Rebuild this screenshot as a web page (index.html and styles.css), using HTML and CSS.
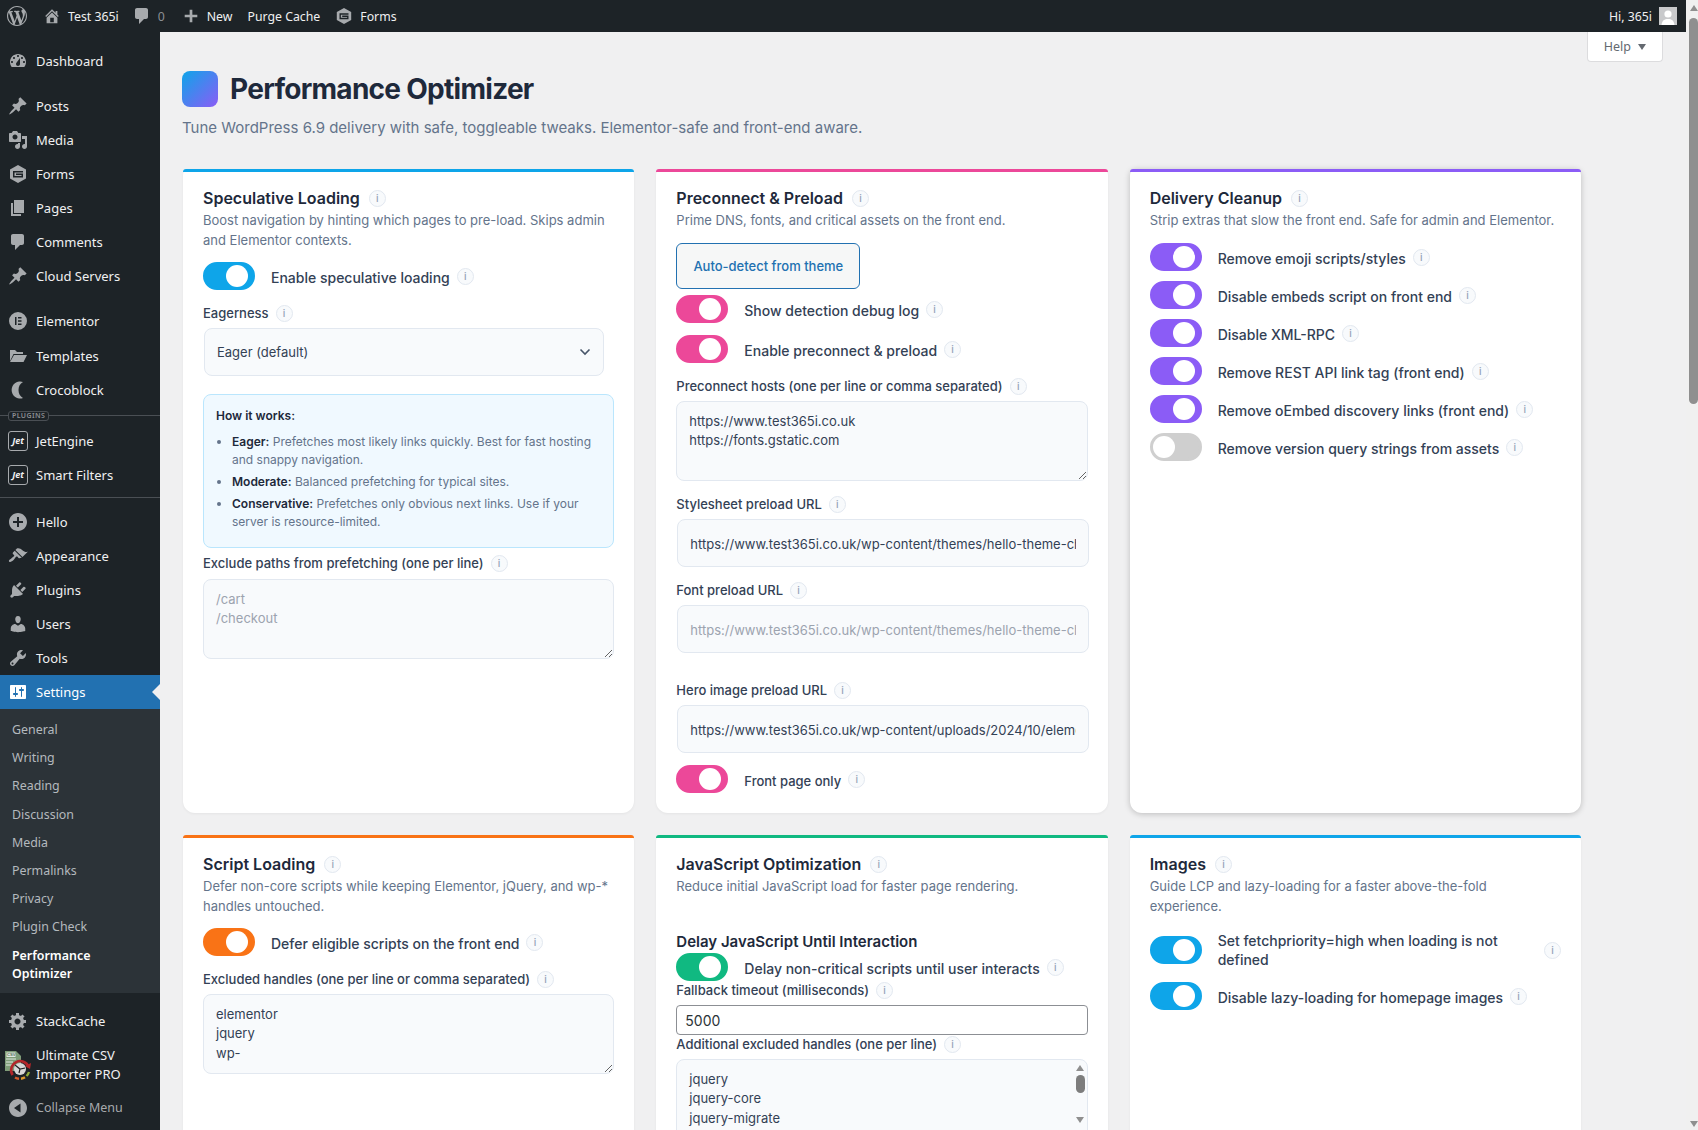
FILE: index.html
```html
<!DOCTYPE html>
<html lang="en">
<head>
    <meta charset="UTF-8">
    <title>Performance Optimizer</title>
    <link rel="stylesheet" href="styles.css">
</head>
<body>
<svg class="sprite" xmlns="http://www.w3.org/2000/svg">
    <symbol id="i-wp" viewBox="0 0 20 20"><path d="M20 10c0-5.510-4.490-10-10-10C4.480 0 0 4.490 0 10c0 5.520 4.480 10 10 10 5.510 0 10-4.480 10-10zM7.780 15.370L4.370 6.220c.55-.02 1.170-.08 1.170-.08.500-.06.440-1.130-.060-1.110 0 0-1.450.110-2.370.110-.18 0-.37 0-.58-.01C4.120 2.690 6.890 1.050 10 1.050c2.330 0 4.450.870 6.030 2.340-.680-.110-1.650.390-1.650 1.580 0 .740.45 1.360.9 2.100.35.610.55 1.360.55 2.460 0 1.490-1.400 5-1.400 5l-3.030-8.370c.54-.020.820-.17.820-.17.500-.05.440-1.250-.060-1.220 0 0-1.440.120-2.380.120-.87 0-2.330-.120-2.330-.120-.500-.030-.560 1.200-.060 1.220l.920.080 1.260 3.410zM17.410 10c.24-.640.740-1.870.430-4.250.7 1.290 1.050 2.710 1.050 4.250 0 3.290-1.730 6.240-4.480 7.830 1-2.670 2-5.220 3-7.830zM6.100 18.090C3.120 16.650 1.110 13.530 1.110 10c0-1.300.230-2.480.72-3.590C3.250 10.300 4.670 14.200 6.100 18.090zm4.030-6.630l2.580 6.980c-.860.290-1.760.450-2.710.450-.790 0-1.570-.110-2.290-.330.810-2.380 1.620-4.740 2.420-7.100z"/></symbol>
    <symbol id="i-home" viewBox="0 0 20 20"><path d="M16 8.500l1.530 1.530-1.060 1.060L10 4.620l-6.470 6.470-1.060-1.060L10 2.500l4 4v-2h2v4zm-6-2.460l6 5.990V18H4v-5.970zM12 17v-5H8v5h4z"/></symbol>
    <symbol id="i-comment" viewBox="0 0 20 20"><path d="M5 2h9c1.100 0 2 .9 2 2v7c0 1.100-.9 2-2 2h-2l-5 5v-5H5c-1.100 0-2-.9-2-2V4c0-1.100.9-2 2-2z"/></symbol>
    <symbol id="i-plus" viewBox="0 0 20 20"><path d="M17 8.500v3h-5.500V17h-3v-5.500H3v-3h5.500V3h3v5.500z"/></symbol>
    <symbol id="i-gf" viewBox="0 0 20 20"><path fill-rule="evenodd" d="M10 1l8 4.500v9L10 19l-8-4.500v-9zM5 7v6.500h10V9.500H8V11h5.500v1H6.500V8.500H15V7z"/></symbol>
    <symbol id="i-dashboard" viewBox="0 0 20 20"><path fill-rule="evenodd" d="M3.760 16h12.480c1.100-1.370 1.760-3.110 1.760-5 0-4.420-3.580-8-8-8s-8 3.580-8 8c0 1.890.66 3.630 1.760 5zM10 4c.55 0 1 .45 1 1s-.45 1-1 1-1-.45-1-1 .45-1 1-1zM6 6c.55 0 1 .45 1 1s-.45 1-1 1-1-.45-1-1 .45-1 1-1zm8 0c.55 0 1 .45 1 1s-.45 1-1 1-1-.45-1-1 .45-1 1-1zm-5.370 5.550L12 7v6c0 1.100-.9 2-2 2s-2-.9-2-2c0-.57.24-1.080.63-1.450zM4 10c.55 0 1 .45 1 1s-.45 1-1 1-1-.45-1-1 .45-1 1-1zm12 0c.55 0 1 .45 1 1s-.45 1-1 1-1-.45-1-1 .45-1 1-1z"/></symbol>
    <symbol id="i-pin" viewBox="0 0 20 20"><path d="M10.440 3.020l1.820-1.820 6.360 6.350-1.830 1.820c-1.050-.68-2.480-.57-3.410.36l-.75.75c-.92.93-1.040 2.350-.35 3.410l-1.830 1.820-2.410-2.410-2.800 2.790c-.42.42-3.380 2.710-3.800 2.290s1.860-3.390 2.280-3.810l2.790-2.790L4.100 9.360l1.830-1.820c1.050.69 2.480.57 3.410-.36l.75-.75c.93-.92 1.050-2.350.35-3.410z"/></symbol>
    <symbol id="i-media" viewBox="0 0 20 20"><path fill-rule="evenodd" d="M13 11V4c0-.55-.45-1-1-1h-1.670L9 1H5L3.670 3H2c-.55 0-1 .45-1 1v7c0 .55.45 1 1 1h10c.55 0 1-.45 1-1zM7 4.500c1.380 0 2.500 1.120 2.500 2.500S8.380 9.500 7 9.500 4.500 8.380 4.500 7 5.620 4.500 7 4.500zM14 6h5v10.500c0 1.380-1.120 2.500-2.500 2.500S14 17.880 14 16.500s1.120-2.500 2.500-2.500c.17 0 .34.020.5.050V9h-3V6zm-4 8.050V13h2v3.500c0 1.380-1.120 2.500-2.500 2.500S7 17.880 7 16.500 8.120 14 9.500 14c.17 0 .34.020.5.050z"/></symbol>
    <symbol id="i-page" viewBox="0 0 20 20"><path d="M6 15V2h10v13H6zm-1 1h8v2H3V5h2v11z"/></symbol>
    <symbol id="i-elementor" viewBox="0 0 20 20"><path fill-rule="evenodd" d="M10 1a9 9 0 1 0 0 18 9 9 0 0 0 0-18zM7 6h1.500v8H7zM10 6h3.500v1.500H10zM10 9.250h3.500v1.500H10zM10 12.500h3.500V14H10z"/></symbol>
    <symbol id="i-folder" viewBox="0 0 20 20"><path d="M2 4h5l2 2h6v2H5.500L2 15zM6 9h13l-3.500 7H2z"/></symbol>
    <symbol id="i-croco" viewBox="0 0 20 20"><path d="M15 2a8.500 8.500 0 1 0 0 16c-3-1.500-4.500-4.500-4.500-8S12 3.500 15 2z"/></symbol>
    <symbol id="i-plus-alt" viewBox="0 0 20 20"><path d="M10 1c-5 0-9 4-9 9s4 9 9 9 9-4 9-9-4-9-9-9zm5 10h-4v4H9v-4H5V9h4V5h2v4h4v2z"/></symbol>
    <symbol id="i-brush" viewBox="0 0 20 20"><path d="M14.480 11.060L7.410 3.990l1.500-1.500c.5-.56 2.300-.47 3.510.32 1.210.8 1.430 1.280 2.910 2.100 1.180.64 2.450 1.260 4.450.85zm-.71.71L6.700 4.700 4.930 6.470c-.39.39-.39 1.020 0 1.410l1.060 1.060c.39.39.39 1.030 0 1.420-.6.6-1.430 1.110-2.210 1.690-.35.26-.7.53-1.010.84C1.430 13.230.28 14.750 1.200 15.670c.98.98 2.990-.21 4.360-1.590.31-.31.58-.66.84-1.010.57-.78 1.080-1.610 1.690-2.210.39-.39 1.020-.39 1.410 0l1.060 1.060c.39.39 1.020.39 1.410 0z"/></symbol>
    <symbol id="i-plugin" viewBox="0 0 20 20"><path d="M13.110 4.360L9.870 7.600 8 5.730l3.240-3.240c.35-.34 1.050-.2 1.560.32.52.51.66 1.210.31 1.550zm-8 1.770l.91-1.120 9.010 9.010-1.190.84c-.71.71-2.630 1.160-3.820 1.160H6.140L4.900 17.260c-.59.59-1.540.59-2.120 0-.59-.58-.59-1.530 0-2.120l1.240-1.240v-3.880c0-1.130.4-3.190 1.090-3.890zm7.260 3.970l3.240-3.240c.34-.35 1.040-.21 1.550.31.52.51.66 1.210.31 1.550l-3.240 3.250z"/></symbol>
    <symbol id="i-user" viewBox="0 0 20 20"><path d="M10 9.250c-2.270 0-2.730-3.440-2.730-3.440C7 4.020 7.820 2 9.970 2c2.160 0 2.980 2.020 2.710 3.810 0 0-.41 3.440-2.680 3.440zm0 2.570L12.720 10c2.390 0 4.520 2.330 4.520 4.530v2.490s-3.650 1.130-7.240 1.130c-3.650 0-7.240-1.130-7.240-1.130v-2.490c0-2.250 1.940-4.480 4.470-4.480z"/></symbol>
    <symbol id="i-tools" viewBox="0 0 20 20"><path fill-rule="evenodd" d="M16.680 9.770c-1.340 1.340-3.300 1.670-4.950.99l-5.410 6.520c-.99.99-2.590.99-3.580 0s-.99-2.590 0-3.570l6.520-5.420c-.68-1.650-.35-3.610.99-4.950 1.280-1.280 3.120-1.620 4.720-1.060l-2.890 2.890 2.820 2.820 2.860-2.870c.53 1.580.18 3.390-1.080 4.650zM3.810 16.210c.4.39 1.040.39 1.430 0 .4-.4.4-1.040 0-1.430-.39-.4-1.030-.4-1.430 0-.39.39-.39 1.030 0 1.430z"/></symbol>
    <symbol id="i-settings" viewBox="0 0 20 20"><path fill-rule="evenodd" d="M18 16V4c0-.55-.45-1-1-1H3c-.55 0-1 .45-1 1v12c0 .55.45 1 1 1h14c.55 0 1-.45 1-1zM8 11h1c.55 0 1 .45 1 1s-.45 1-1 1H8v1.500c0 .28-.22.5-.5.5s-.5-.22-.5-.5V13H6c-.55 0-1-.45-1-1s.45-1 1-1h1V5.500c0-.28.22-.5.5-.5s.5.22.5.5V11zm5-2h-1c-.55 0-1-.45-1-1s.45-1 1-1h1V5.500c0-.28.22-.5.5-.5s.5.22.5.5V7h1c.55 0 1 .45 1 1s-.45 1-1 1h-1v5.500c0 .28-.22.5-.5.5s-.5-.22-.5-.5V9z"/></symbol>
    <symbol id="i-gear" viewBox="0 0 20 20"><path fill-rule="evenodd" d="M18 12h-2.180c-.17.7-.44 1.350-.81 1.930l1.540 1.540-2.100 2.100-1.540-1.540c-.58.36-1.230.63-1.910.79V19H8v-2.180c-.68-.16-1.330-.43-1.910-.79l-1.540 1.540-2.120-2.120 1.540-1.540c-.36-.58-.63-1.230-.79-1.910H1V9.030h2.170c.16-.7.44-1.360.8-1.940L2.430 5.550l2.100-2.100 1.540 1.540c.58-.37 1.240-.64 1.930-.81V2h3v2.180c.68.16 1.330.43 1.910.79l1.540-1.540 2.120 2.120-1.540 1.540c.36.59.64 1.240.8 1.940H18V12zm-8.500 1.500c1.660 0 3-1.340 3-3s-1.340-3-3-3-3 1.340-3 3 1.340 3 3 3z"/></symbol>
    <symbol id="i-collapse" viewBox="0 0 20 20"><path fill-rule="evenodd" d="M10 1c-5 0-9 4-9 9s4 9 9 9 9-4 9-9-4-9-9-9zM12.500 5.500v9L6 10z"/></symbol>
</svg>

<div class="viewport">
    <header class="adminbar">
        <svg class="bar-logo"><use href="#i-wp"/></svg>
        <a class="bar-item bar-site"><svg class="bar-icon"><use href="#i-home"/></svg>Test 365i</a>
        <a class="bar-item bar-comments"><svg class="bar-icon bar-icon-small"><use href="#i-comment"/></svg><span class="bar-count">0</span></a>
        <a class="bar-item bar-new"><svg class="bar-icon"><use href="#i-plus"/></svg>New</a>
        <a class="bar-item bar-purge">Purge Cache</a>
        <a class="bar-item bar-forms"><svg class="bar-icon"><use href="#i-gf"/></svg>Forms</a>
        <a class="bar-item bar-user">Hi, 365i
            <svg class="avatar" viewBox="0 0 18 18"><rect width="18" height="18" fill="#c8c9cb"/><circle cx="9" cy="7" r="3.600" fill="#fff"/><path d="M2.500 18c.5-4.500 3-6 6.500-6s6 1.500 6.500 6z" fill="#fff"/></svg>
        </a>
    </header>

    <div class="layout">
        <nav class="sidebar">
            <a class="menu-item"><svg class="menu-icon"><use href="#i-dashboard"/></svg>Dashboard</a>
            <div class="menu-sep"></div>
            <a class="menu-item"><svg class="menu-icon"><use href="#i-pin"/></svg>Posts</a>
            <a class="menu-item"><svg class="menu-icon"><use href="#i-media"/></svg>Media</a>
            <a class="menu-item"><svg class="menu-icon"><use href="#i-gf"/></svg>Forms</a>
            <a class="menu-item"><svg class="menu-icon"><use href="#i-page"/></svg>Pages</a>
            <a class="menu-item"><svg class="menu-icon"><use href="#i-comment"/></svg>Comments</a>
            <a class="menu-item"><svg class="menu-icon"><use href="#i-pin"/></svg>Cloud Servers</a>
            <div class="menu-sep"></div>
            <a class="menu-item"><svg class="menu-icon"><use href="#i-elementor"/></svg>Elementor</a>
            <a class="menu-item menu-item-nudge"><svg class="menu-icon"><use href="#i-folder"/></svg>Templates</a>
            <a class="menu-item"><svg class="menu-icon"><use href="#i-croco"/></svg>Crocoblock</a>
            <div class="menu-tag"><span>PLUGINS</span></div>
            <a class="menu-item"><span class="jet-icon">Jet</span>JetEngine</a>
            <a class="menu-item"><span class="jet-icon">Jet</span>Smart Filters</a>
            <div class="menu-sep menu-sep-line"></div>
            <a class="menu-item"><svg class="menu-icon"><use href="#i-plus-alt"/></svg>Hello</a>
            <a class="menu-item"><svg class="menu-icon"><use href="#i-brush"/></svg>Appearance</a>
            <a class="menu-item"><svg class="menu-icon"><use href="#i-plugin"/></svg>Plugins</a>
            <a class="menu-item"><svg class="menu-icon"><use href="#i-user"/></svg>Users</a>
            <a class="menu-item"><svg class="menu-icon"><use href="#i-tools"/></svg>Tools</a>
            <a class="menu-item menu-item-active"><svg class="menu-icon"><use href="#i-settings"/></svg>Settings</a>
            <div class="submenu">
                <a class="sub-item">General</a>
                <a class="sub-item">Writing</a>
                <a class="sub-item">Reading</a>
                <a class="sub-item">Discussion</a>
                <a class="sub-item">Media</a>
                <a class="sub-item">Permalinks</a>
                <a class="sub-item">Privacy</a>
                <a class="sub-item">Plugin Check</a>
                <a class="sub-item sub-item-current">Performance Optimizer</a>
            </div>
            <a class="menu-item menu-item-first"><svg class="menu-icon"><use href="#i-gear"/></svg>StackCache</a>
            <a class="menu-item menu-item-tall">
                <svg class="csv-icon" viewBox="0 0 28 30">
                    <path d="M1 1h11l5 5v15H1z" fill="#7e9c78"/>
                    <rect x="2.500" y="2.500" width="9" height="4.500" fill="#dfe8df"/>
                    <text x="3" y="6.400" font-size="4.200" font-weight="700" font-family="Liberation Sans" fill="#55705a">CSV</text>
                    <path d="M2 9h10M2 12h7M2 15h6" stroke="#dfe8df" stroke-width="1.200"/>
                    <path d="M8.600 25a9 9 0 1 1 16 -8" fill="none" stroke="#b3262a" stroke-width="2.600"/>
                    <path d="M27 13l-1 6-5-3z" fill="#b3262a"/>
                    <circle cx="16" cy="19" r="6" fill="#d8d8d8"/>
                    <path d="M11 15l5 4 5-1M16 19l-1 4" fill="none" stroke="#222" stroke-width="1.200"/>
                    <path d="M11 27.500a9.500 9.500 0 0 0 4 1.300" fill="none" stroke="#d35a2a" stroke-width="2.400"/>
                    <path d="M17 28.800a9.500 9.500 0 0 0 4-1.500" fill="none" stroke="#dd9a2e" stroke-width="2.400"/>
                    <path d="M22.500 26a9.500 9.500 0 0 0 2.500-4" fill="none" stroke="#8fae3c" stroke-width="2.400"/>
                </svg>
                <span class="menu-two-line">Ultimate CSV Importer PRO</span>
            </a>
            <a class="menu-item menu-item-dim"><svg class="menu-icon"><use href="#i-collapse"/></svg>Collapse Menu</a>
        </nav>

        <main class="content">
            <button class="help-tab">Help <span class="help-caret"></span></button>

            <div class="page-head">
                <span class="page-logo"></span>
                <h1>Performance Optimizer</h1>
            </div>
            <p class="page-sub">Tune WordPress 6.9 delivery with safe, toggleable tweaks. Elementor-safe and front-end aware.</p>

            <div class="cards">
                <!-- first row -->
                <section class="card card-sky">
                    <h2>Speculative Loading <span class="info">i</span></h2>
                    <p class="card-desc">Boost navigation by hinting which pages to pre-load. Skips admin and Elementor contexts.</p>
                    <div class="toggle-row"><span class="toggle on"></span><span class="toggle-text">Enable speculative loading</span><span class="info">i</span></div>

                    <label class="field-label field-label-eager">Eagerness <span class="info">i</span></label>
                    <div class="select-wrap">
                        <select class="select"><option>Eager (default)</option></select>
                        <svg class="select-chevron" viewBox="0 0 12 8"><path d="M1.500 1.500L6 6l4.500-4.500" fill="none" stroke="#475569" stroke-width="1.600"/></svg>
                    </div>

                    <div class="howto">
                        <strong class="howto-title">How it works:</strong>
                        <ul>
                            <li><strong>Eager:</strong> Prefetches most likely links quickly. Best for fast hosting and snappy navigation.</li>
                            <li><strong>Moderate:</strong> Balanced prefetching for typical sites.</li>
                            <li><strong>Conservative:</strong> Prefetches only obvious next links. Use if your server is resource-limited.</li>
                        </ul>
                    </div>

                    <label class="field-label field-label-close">Exclude paths from prefetching (one per line) <span class="info">i</span></label>
                    <textarea class="textarea" placeholder="/cart&#10;/checkout"></textarea>
                </section>

                <section class="card card-pink">
                    <h2>Preconnect &amp; Preload <span class="info">i</span></h2>
                    <p class="card-desc">Prime DNS, fonts, and critical assets on the front end.</p>
                    <button class="detect-btn">Auto-detect from theme</button>
                    <div class="toggle-row toggle-row-debug"><span class="toggle on"></span><span class="toggle-text">Show detection debug log</span><span class="info">i</span></div>
                    <div class="toggle-row toggle-row-next"><span class="toggle on"></span><span class="toggle-text">Enable preconnect &amp; preload</span><span class="info">i</span></div>

                    <label class="field-label">Preconnect hosts (one per line or comma separated) <span class="info">i</span></label>
                    <textarea class="textarea">https://www.test365i.co.uk
https://fonts.gstatic.com</textarea>

                    <label class="field-label">Stylesheet preload URL <span class="info">i</span></label>
                    <input class="text-input" type="text" value="https://www.test365i.co.uk/wp-content/themes/hello-theme-child/style.css">

                    <label class="field-label">Font preload URL <span class="info">i</span></label>
                    <input class="text-input" type="text" placeholder="https://www.test365i.co.uk/wp-content/themes/hello-theme-child/font.woff2">

                    <label class="field-label field-label-far">Hero image preload URL <span class="info">i</span></label>
                    <input class="text-input" type="text" value="https://www.test365i.co.uk/wp-content/uploads/2024/10/elementor-hero.webp">

                    <div class="toggle-row toggle-row-front"><span class="toggle on"></span><span class="toggle-text toggle-text-plain">Front page only</span><span class="info">i</span></div>
                </section>

                <section class="card card-violet card-raised">
                    <h2>Delivery Cleanup <span class="info">i</span></h2>
                    <p class="card-desc">Strip extras that slow the front end. Safe for admin and Elementor.</p>
                    <div class="toggle-list">
                        <div class="toggle-row"><span class="toggle on"></span><span class="toggle-text">Remove emoji scripts/styles</span><span class="info">i</span></div>
                        <div class="toggle-row"><span class="toggle on"></span><span class="toggle-text">Disable embeds script on front end</span><span class="info">i</span></div>
                        <div class="toggle-row"><span class="toggle on"></span><span class="toggle-text">Disable XML-RPC</span><span class="info">i</span></div>
                        <div class="toggle-row"><span class="toggle on"></span><span class="toggle-text">Remove REST API link tag (front end)</span><span class="info">i</span></div>
                        <div class="toggle-row"><span class="toggle on"></span><span class="toggle-text">Remove oEmbed discovery links (front end)</span><span class="info">i</span></div>
                        <div class="toggle-row"><span class="toggle"></span><span class="toggle-text">Remove version query strings from assets</span><span class="info">i</span></div>
                    </div>
                </section>

                <!-- second row -->
                <section class="card card-orange">
                    <h2>Script Loading <span class="info">i</span></h2>
                    <p class="card-desc">Defer non-core scripts while keeping Elementor, jQuery, and wp-* handles untouched.</p>
                    <div class="toggle-row"><span class="toggle on"></span><span class="toggle-text">Defer eligible scripts on the front end</span><span class="info">i</span></div>
                    <label class="field-label">Excluded handles (one per line or comma separated) <span class="info">i</span></label>
                    <textarea class="textarea">elementor
jquery
wp-</textarea>
                </section>

                <section class="card card-green">
                    <h2>JavaScript Optimization <span class="info">i</span></h2>
                    <p class="card-desc">Reduce initial JavaScript load for faster page rendering.</p>
                    <h3>Delay JavaScript Until Interaction</h3>
                    <div class="toggle-row"><span class="toggle on"></span><span class="toggle-text">Delay non-critical scripts until user interacts</span><span class="info">i</span></div>
                    <label class="field-label field-label-tight">Fallback timeout (milliseconds) <span class="info">i</span></label>
                    <input class="number-input" type="text" value="5000">
                    <label class="field-label field-label-tight">Additional excluded handles (one per line) <span class="info">i</span></label>
                    <div class="scroll-area">
                        <textarea class="textarea textarea-long">jquery
jquery-core
jquery-migrate
elementor
wp-</textarea>
                        <div class="mini-scroll">
                            <span class="mini-up"></span>
                            <span class="mini-thumb"></span>
                            <span class="mini-down"></span>
                        </div>
                    </div>
                </section>

                <section class="card card-sky">
                    <h2>Images <span class="info">i</span></h2>
                    <p class="card-desc">Guide LCP and lazy-loading for a faster above-the-fold experience.</p>
                    <div class="toggle-row toggle-row-wide"><span class="toggle on"></span><span class="toggle-text toggle-text-wrap">Set fetchpriority=high when loading is not defined</span><span class="info">i</span></div>
                    <div class="toggle-row toggle-row-lazy"><span class="toggle on"></span><span class="toggle-text">Disable lazy-loading for homepage images</span><span class="info">i</span></div>
                </section>
            </div>
        </main>
    </div>
</div>

<div class="page-scrollbar">
    <span class="scroll-up"></span>
    <span class="scroll-thumb"></span>
    <span class="scroll-down"></span>
</div>
</body>
</html>
```

FILE: styles.css
```css
* {
    box-sizing: border-box;
}

html, body {
    height: 100%;
}

body {
    margin: 0;
    display: flex;
    overflow: hidden;
    background-color: #f0f0f1;
    font-family: Inter, "Liberation Sans", sans-serif;
    color: #1e293b;
}

.sprite {
    display: none;
}

.viewport {
    flex: 1;
    min-width: 0;
    display: flex;
    flex-direction: column;
}

/* Admin bar */
.adminbar {
    height: 32px;
    flex: none;
    display: flex;
    align-items: center;
    background-color: #1d2327;
    color: #f0f0f1;
    font-family: "Noto Sans", sans-serif;
    font-size: 12.3px;
}

.adminbar svg {
    fill: #a7aaad;
}

.bar-logo {
    width: 20px;
    height: 20px;
    margin-left: 7px;
}

.bar-item {
    display: flex;
    align-items: center;
    white-space: nowrap;
}

.bar-icon {
    width: 18px;
    height: 18px;
    margin-right: 7px;
}

.bar-icon-small {
    width: 20px;
    height: 20px;
    margin-right: 6px;
}

.bar-site {
    margin-left: 16px;
}

.bar-comments {
    margin-left: 13px;
}

.bar-count {
    color: #8c8f94;
}

.bar-new {
    margin-left: 17px;
}

.bar-purge {
    margin-left: 15px;
}

.bar-forms {
    margin-left: 15px;
}

.bar-user {
    margin-left: auto;
    margin-right: 9px;
}

.avatar {
    width: 18px;
    height: 18px;
    margin-left: 7px;
}

/* Sidebar */
.layout {
    flex: 1;
    min-height: 0;
    display: flex;
}

.sidebar {
    width: 160px;
    flex: none;
    padding-top: 12px;
    background-color: #1d2327;
    color: #f0f0f1;
    font-family: "Noto Sans", sans-serif;
    font-size: 13px;
}

.menu-item {
    height: 34px;
    display: flex;
    align-items: center;
    padding-left: 8px;
}

.menu-item-nudge {
    margin-top: 1px;
}

.menu-icon {
    width: 20px;
    height: 20px;
    flex: none;
    margin-right: 8px;
    fill: #a7aaad;
}

.menu-sep {
    height: 11px;
}

.menu-sep-line {
    height: 13px;
    background: linear-gradient(#4a4f54, #4a4f54) 0 5px / 100% 1px no-repeat;
}

.menu-tag {
    height: 17px;
    display: flex;
    align-items: center;
    color: #8c8f94;
    font-size: 7px;
    font-weight: 600;
    letter-spacing: .4px;
}

.menu-tag::before, .menu-tag::after {
    content: "";
    height: 1px;
    background-color: #4a4f54;
}

.menu-tag::before {
    width: 8px;
}

.menu-tag::after {
    flex: 1;
}

.menu-tag span {
    padding: 0 3px;
    line-height: 8px;
    border: 1px solid #4a4f54;
    border-radius: 3px;
}

.jet-icon {
    width: 20px;
    height: 20px;
    flex: none;
    margin-right: 8px;
    border: 1px solid #a7aaad;
    border-radius: 3px;
    color: #f0f0f1;
    font-size: 9px;
    font-weight: 700;
    font-style: italic;
    line-height: 18px;
    text-align: center;
}

.menu-item-active {
    position: relative;
    background-color: #2271b1;
    color: #fff;
}

.menu-item-active .menu-icon {
    fill: #fff;
}

.menu-item-active::after {
    content: "";
    position: absolute;
    right: 0;
    top: 50%;
    margin-top: -8px;
    border: 8px solid transparent;
    border-right-color: #f0f0f1;
    border-left-width: 0;
}

.submenu {
    padding: 7px 0 5px;
    background-color: #2c3338;
    font-size: 12.4px;
    color: #b4b9be;
}

.sub-item {
    display: block;
    padding: 5.1px 12px;
    line-height: 18px;
}

.sub-item-current {
    color: #fff;
    font-weight: 600;
}

.menu-item-first {
    margin-top: 11px;
}

.menu-item-tall {
    height: 53px;
    padding-left: 4px;
    padding-top: 2px;
}

.csv-icon {
    width: 28px;
    height: 30px;
    flex: none;
    margin-right: 4px;
}

.menu-two-line {
    line-height: 19px;
}

.menu-item-dim {
    color: #a7aaad;
    font-size: 12.5px;
}

/* Main area */
.content {
    flex: 1;
    min-width: 0;
    position: relative;
    padding: 39px 105px 0 23px;
    overflow: hidden;
}

.help-tab {
    position: absolute;
    top: 0;
    right: 23px;
    width: 76px;
    height: 30px;
    padding: 0;
    border: 1px solid #dcdcde;
    border-top: 0;
    border-radius: 0 0 4px 4px;
    background-color: #fff;
    color: #646970;
    font-family: "Noto Sans", sans-serif;
    font-size: 12.5px;
}

.help-caret {
    display: inline-block;
    margin-left: 4px;
    vertical-align: 1px;
    border: 4px solid transparent;
    border-top: 6px solid #646970;
    border-bottom: 0;
}

.page-head {
    display: flex;
    align-items: center;
    gap: 12px;
    margin-left: -1px;
}

.page-logo {
    width: 36px;
    height: 36px;
    border-radius: 8px;
    background: linear-gradient(135deg, #0ea5e9, #8b5cf6);
}

h1 {
    margin: 0;
    font-size: 28px;
    font-weight: 700;
    letter-spacing: -.72px;
    color: #1e293b;
}

.page-sub {
    margin: 10px 0 0 -1px;
    font-size: 15px;
    line-height: 22px;
    color: #64748b;
}

.cards {
    display: grid;
    grid-template-columns: repeat(3, 1fr);
    gap: 22px;
    margin-top: 30px;
}

.card {
    position: relative;
    padding: 18px 20px 20px;
    border-radius: 6px 6px 12px 12px;
    background-color: #fff;
    box-shadow: 0 1px 3px rgba(0, 0, 0, .05);
}

.card::before {
    content: "";
    position: absolute;
    left: 0;
    right: 0;
    top: 0;
    height: 3px;
    border-radius: 3px 3px 0 0;
    background-color: var(--accent);
}

.card-sky { --accent: #0ea5e9; }
.card-pink { --accent: #ec4899; }
.card-violet { --accent: #8b5cf6; }
.card-orange { --accent: #f97316; }
.card-green { --accent: #10b981; }

.card-raised {
    box-shadow: 0 1px 6px rgba(0, 0, 0, .22);
}

h2 {
    display: flex;
    align-items: center;
    gap: 9px;
    margin: 0;
    font-size: 16px;
    font-weight: 600;
    line-height: 22px;
    color: #1e293b;
}

h3 {
    margin: 35px 0 0;
    font-size: 15px;
    font-weight: 600;
    line-height: 22px;
    color: #1e293b;
}

.card-desc {
    margin: 1px 0 12px;
    font-size: 13px;
    line-height: 20px;
    color: #64748b;
}

.info {
    display: inline-flex;
    align-items: center;
    justify-content: center;
    width: 17px;
    height: 17px;
    flex: none;
    border: 1px solid #e2e8f0;
    border-radius: 50%;
    background-color: #f8fafc;
    color: #94a3b8;
    font-size: 10px;
    font-weight: 500;
}

/* Toggles */
.toggle-row {
    display: flex;
    align-items: center;
    gap: 16px;
    font-size: 14px;
    color: #334155;
}

.toggle {
    position: relative;
    width: 52px;
    height: 28px;
    flex: none;
    border-radius: 14px;
    background-color: #cfcfcf;
    border: 3px solid #cfcfcf;
}

.toggle::after {
    content: "";
    position: absolute;
    left: 0;
    top: 0;
    width: 22px;
    height: 22px;
    border-radius: 50%;
    background-color: #fff;
}

.toggle.on {
    background-color: var(--accent);
    border-color: var(--accent);
}

.toggle.on::after {
    left: 20px;
}

.toggle-text {
    padding-top: 2px;
    margin-right: -9px;
    font-weight: 500;
}

.toggle-text-plain {
    padding-top: 4px;
    font-size: 13px;
}

.toggle-row-debug {
    margin-top: 6px;
}

.toggle-row-next {
    margin-top: 12px;
}

.toggle-row-front {
    margin-top: 12px;
}

.toggle-row-wide {
    margin-top: 15px;
}

.toggle-text-wrap {
    flex: 1;
    padding-top: 0;
    margin-right: 0;
    line-height: 19px;
}

.toggle-row-lazy {
    margin-top: 13px;
}

.toggle-list {
    display: flex;
    flex-direction: column;
    gap: 10px;
    margin-top: 13px;
}

/* Fields */
.field-label {
    display: flex;
    align-items: center;
    gap: 7px;
    margin: 13px 0 5px;
    font-size: 13px;
    font-weight: 500;
    line-height: 20px;
    color: #334155;
}

.field-label-close {
    margin: 5px 0 6px;
}

.field-label-far {
    margin-top: 27px;
}

.field-label-tight {
    margin: 0 0 6px;
    line-height: 18px;
}

.select-wrap {
    position: relative;
    width: 400px;
    margin-left: 1px;
}

.select {
    width: 100%;
    height: 48px;
    padding: 0 12px;
    appearance: none;
    border: 1px solid #e2e8f0;
    border-radius: 8px;
    background-color: #f8fafc;
    color: #334155;
    font-family: inherit;
    font-size: 13px;
}

.select-chevron {
    position: absolute;
    right: 13px;
    top: 20px;
    width: 12px;
    height: 8px;
}

.textarea, .text-input {
    display: block;
    width: 100%;
    border: 1px solid #e2e8f0;
    border-radius: 8px;
    background-color: #f8fafc;
    color: #334155;
    font-family: inherit;
    font-size: 13px;
    outline: none;
}

.textarea {
    height: 80px;
    padding: 10px 12px;
    line-height: 19.4px;
}

.text-input {
    height: 48px;
    margin-left: 1px;
    padding: 1px 12px 0;
}

.textarea::placeholder, .text-input::placeholder {
    color: #9ca3af;
}

.number-input {
    display: block;
    width: 100%;
    height: 30px;
    padding: 0 8px;
    border: 1px solid #8c8f94;
    border-radius: 4px;
    background-color: #fff;
    color: #2c3338;
    font-family: inherit;
    font-size: 14px;
}

.howto {
    margin-top: 18px;
    padding: 12px 12px 16px;
    border: 1px solid #bae6fd;
    border-radius: 8px;
    background-color: #f0f9ff;
    font-size: 12px;
    line-height: 18px;
    color: #64748b;
}

.howto strong {
    font-weight: 600;
    color: #1e293b;
}

.howto-title {
    display: block;
}

.howto ul {
    margin: 8px 0 0;
    padding-left: 16px;
}

.howto li {
    margin-top: 4px;
}

.howto li::marker {
    color: #64748b;
}

/* Scrolling textarea in the JavaScript card */
.scroll-area {
    position: relative;
}

.textarea-long {
    height: 130px;
    resize: none;
    overflow: hidden;
}

.mini-scroll {
    position: absolute;
    top: 6px;
    right: 3px;
    width: 9px;
    height: 58px;
    display: flex;
    flex-direction: column;
    align-items: center;
}

.mini-up, .mini-down {
    width: 0;
    border: 4.5px solid transparent;
}

.mini-up {
    border-top: 0;
    border-bottom: 6px solid #8f8f8f;
}

.mini-down {
    margin-top: auto;
    border-bottom: 0;
    border-top: 6px solid #8f8f8f;
}

.mini-thumb {
    width: 9px;
    height: 18px;
    margin-top: 4px;
    border-radius: 4.5px;
    background-color: #7d7d7d;
}

/* Detect button */
.detect-btn {
    display: block;
    width: 184px;
    height: 46px;
    margin-top: 13px;
    border: 1px solid #2271b1;
    border-radius: 6px;
    background-color: #f6f7f7;
    color: #2271b1;
    font-family: inherit;
    font-size: 13px;
    font-weight: 500;
}

/* Page scrollbar */
.page-scrollbar {
    width: 12px;
    flex: none;
    display: flex;
    flex-direction: column;
    align-items: center;
    padding: 5px 0 3px 3px;
    background-color: #f0f0f0;
}

.scroll-up, .scroll-down {
    width: 0;
    border: 4.5px solid transparent;
}

.scroll-up {
    border-top: 0;
    border-bottom: 6px solid #8f8f8f;
}

.scroll-down {
    margin-top: auto;
    border-bottom: 0;
    border-top: 6px solid #8f8f8f;
}

.scroll-thumb {
    width: 9px;
    height: 386px;
    margin-top: 7px;
    border-radius: 4.5px;
    background-color: #8f8f8f;
}
```
